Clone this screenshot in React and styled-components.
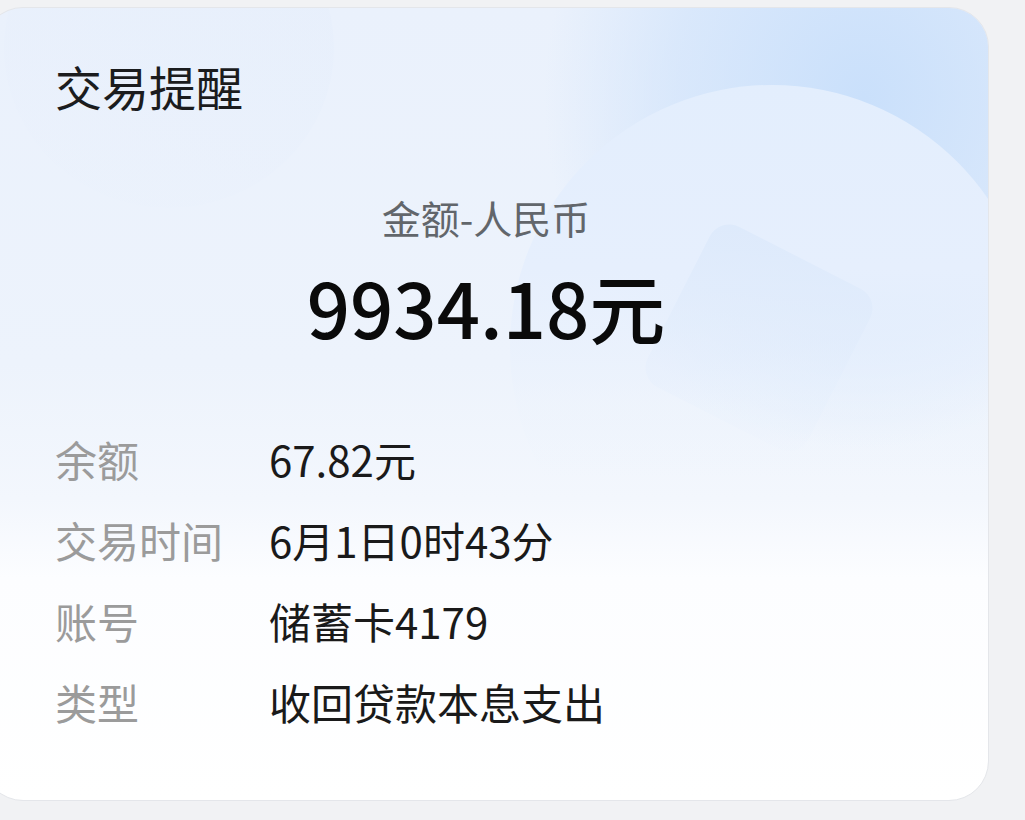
import React from 'react';
import styled, { createGlobalStyle } from 'styled-components';

const GlobalStyle = createGlobalStyle`
  html, body {
    margin: 0;
    padding: 0;
    background: #f1f2f4;
    overflow: hidden;
  }
  body {
    font-family: 'Noto Sans CJK SC', 'Noto Sans', sans-serif;
  }
`;

const details = [
  { label: '余额', value: '67.82元' },
  { label: '交易时间', value: '6月1日0时43分' },
  { label: '账号', value: '储蓄卡4179' },
  { label: '类型', value: '收回贷款本息支出' },
];

export default function App() {
  return (
    <Page>
      <GlobalStyle />
      <Card>
        <Deco>
          <TopBand />
          <BigCircle />
          <SmallCircle />
          <Diamond />
        </Deco>
        <Content>
          <Title>交易提醒</Title>
          <AmountBlock>
            <AmountLabel>金额-人民币</AmountLabel>
            <Amount>9934.18元</Amount>
          </AmountBlock>
          <DetailGrid>
            {details.map((d) => (
              <React.Fragment key={d.label}>
                <Label>{d.label}</Label>
                <Value>{d.value}</Value>
              </React.Fragment>
            ))}
          </DetailGrid>
        </Content>
      </Card>
    </Page>
  );
}

// STYLED COMPONENTS //

const Page = styled.div`
  width: 1025px;
  height: 820px;
  padding-top: 7px;
  box-sizing: border-box;
`;

const Card = styled.div`
  position: relative;
  overflow: hidden;
  margin-left: -17px;
  width: 1006px;
  height: 794px;
  box-sizing: border-box;
  border: 1px solid #e4e6ea;
  border-radius: 40px;
  background: linear-gradient(180deg, #eaf1fc 0%, #edf3fc 45%, #f3f7fd 62%, #fcfdff 72%, #ffffff 100%);
`;

const Deco = styled.div`
  position: absolute;
  inset: 0;
  pointer-events: none;
`;

const TopBand = styled.div`
  position: absolute;
  left: 560px;
  top: -260px;
  width: 640px;
  height: 700px;
  border-radius: 50%;
  background: radial-gradient(closest-side, rgba(198, 222, 251, 0.9), rgba(208, 227, 251, 0.65) 60%, rgba(233, 241, 252, 0) 100%);
`;

const BigCircle = styled.div`
  position: absolute;
  left: 526px;
  top: 77px;
  width: 524px;
  height: 524px;
  border-radius: 50%;
  background: linear-gradient(180deg, #e3eefd 0%, #e6effd 35%, rgba(236, 243, 253, 0.4) 60%, rgba(240, 246, 253, 0) 75%);
`;

const SmallCircle = styled.div`
  position: absolute;
  left: 20px;
  top: -120px;
  width: 330px;
  height: 320px;
  border-radius: 50%;
  background: linear-gradient(200deg, rgba(228, 237, 251, 0.55), rgba(234, 241, 252, 0.05));
`;

const Diamond = styled.div`
  position: absolute;
  left: 685px;
  top: 240px;
  width: 180px;
  height: 180px;
  border-radius: 22px;
  transform: rotate(27deg);
  background: linear-gradient(160deg, rgba(220, 233, 251, 0.85), rgba(228, 238, 252, 0.4) 70%, rgba(236, 243, 253, 0.05));
`;

const Content = styled.div`
  position: relative;
  padding: 54px 0 0 71px;
`;

const Title = styled.h1`
  margin: 0;
  font-size: 47px;
  line-height: 47px;
  font-weight: 400;
  color: #1b1c1e;
`;

const AmountBlock = styled.div`
  display: flex;
  flex-direction: column;
  align-items: center;
  margin-left: -71px;
  margin-top: 87px;
`;

const AmountLabel = styled.div`
  font-size: 39px;
  line-height: 42px;
  color: #62666b;
`;

const Amount = styled.div`
  margin-top: 28px;
  font-size: 76px;
  line-height: 80px;
  font-weight: 500;
  color: #0a0a0a;
`;

const DetailGrid = styled.div`
  display: grid;
  grid-template-columns: 214px auto;
  grid-auto-rows: 81px;
  align-items: center;
  margin-top: 72px;
`;

const Label = styled.div`
  font-size: 42px;
  line-height: 44px;
  color: #9b9b9b;
`;

const Value = styled.div`
  font-size: 42px;
  line-height: 44px;
  color: #1a1a1a;
`;
